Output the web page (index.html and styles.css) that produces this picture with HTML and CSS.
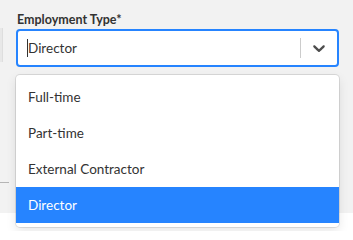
FILE: index.html
```html
<!DOCTYPE html>
<html lang="en">
<head>
<meta charset="utf-8">
<title>Employment Type</title>
<link rel="stylesheet" href="styles.css">
</head>
<body>
<div class="panel">
  <div class="side">
    <div class="side-box"></div>
    <div class="side-rule"></div>
  </div>
  <div class="field">
    <label class="label">Employment Type*</label>
    <div class="select">
      <div class="control">
        <div class="value"><span class="caret"></span>Director</div>
        <div class="indicators">
          <span class="sep"></span>
          <svg class="chev" width="20" height="20" viewBox="0 0 20 20"><path d="M4.516 7.548c0.436-0.446 1.043-0.481 1.576 0l3.908 3.747 3.908-3.747c0.533-0.481 1.141-0.446 1.574 0 0.436 0.445 0.408 1.197 0 1.615-0.406 0.418-4.695 4.502-4.695 4.502-0.217 0.223-0.502 0.335-0.787 0.335s-0.57-0.112-0.789-0.335c0 0-4.287-4.084-4.695-4.502s-0.436-1.17 0-1.615z" fill="#4d4d4d"/></svg>
        </div>
      </div>
      <div class="menu">
        <div class="option">Full-time</div>
        <div class="option">Part-time</div>
        <div class="option">External Contractor</div>
        <div class="option selected">Director</div>
      </div>
    </div>
  </div>
</div>
<div class="footer"></div>
</body>
</html>
```
FILE: styles.css
```css
html, body {
  margin: 0;
  padding: 0;
}
body {
  width: 353px;
  height: 231px;
  overflow: hidden;
  background: #ffffff;
  font-family: Lato, "Open Sans", sans-serif;
  color: #333333;
}
.panel {
  height: 213px;
  background: #f2f2f2;
  display: flex;
}
.side {
  width: 16px;
  display: flex;
  flex-direction: column;
}
.side-box {
  margin-top: 28px;
  width: 2px;
  height: 34px;
  background: #e8e8e8;
  border-right: 1px solid #dedede;
}
.side-rule {
  margin-top: 120px;
  width: 9px;
  height: 1px;
  background: #b5b5b5;
}
.field {
  width: 323px;
  padding-top: 11px;
}
.label {
  display: block;
  font-size: 12.5px;
  font-weight: 700;
  line-height: 17px;
  color: #333333;
  margin-left: 1px;
  margin-bottom: 1px;
}
.select {
  position: relative;
}
.control {
  box-sizing: border-box;
  height: 38px;
  background: #ffffff;
  border: 2px solid #2684ff;
  border-radius: 4px;
  display: flex;
  align-items: center;
}
.value {
  flex: 1;
  padding-left: 9px;
  font-size: 13.5px;
  color: #333333;
  display: flex;
  align-items: center;
}
.caret {
  width: 1px;
  height: 18px;
  background: #333333;
  margin-right: 0;
}
.indicators {
  display: flex;
  align-items: center;
  height: 100%;
}
.sep {
  width: 1px;
  height: 20px;
  background: #cccccc;
}
.chev {
  margin: 0 8px;
}
.menu {
  position: absolute;
  left: 0;
  right: 0;
  top: 46px;
  background: #ffffff;
  border-radius: 4px;
  padding: 4px 0;
  box-shadow: 0 0 0 1px rgba(0, 0, 0, 0.1), 0 4px 11px rgba(0, 0, 0, 0.1);
}
.option {
  padding: 8px 12px;
  line-height: 20px;
  font-size: 13.5px;
  color: #333333;
}
.option.selected {
  background: #2684ff;
  color: #ffffff;
}
.footer {
  height: 18px;
  background: #ffffff;
}
```
